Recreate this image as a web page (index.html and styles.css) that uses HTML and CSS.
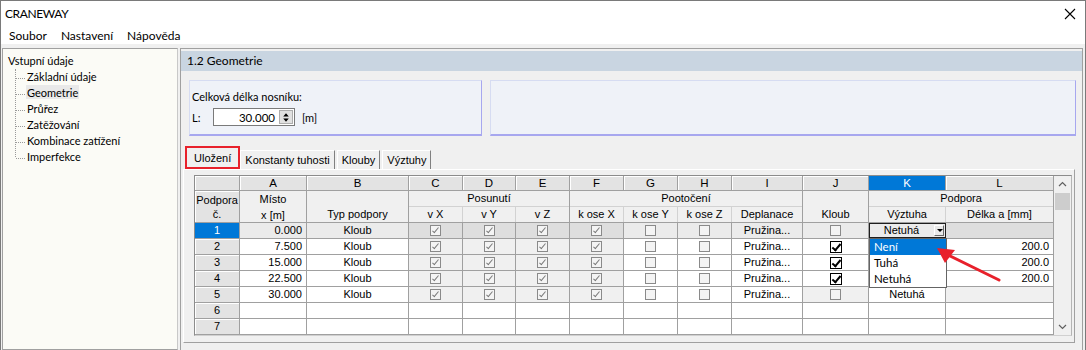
FILE: index.html
```html
<!DOCTYPE html>
<html lang="cs">
<head>
    <meta charset="UTF-8">
    <title>CRANEWAY</title>
    <link rel="stylesheet" href="styles.css">
</head>
<body>
    <div class="window">
        <div class="titlebar">
            <span class="title">CRANEWAY</span>
            <svg class="close" width="12" height="12" viewBox="0 0 12 12"><path d="M1 1L11 11M11 1L1 11" stroke="#000" stroke-width="1.1" fill="none"/></svg>
        </div>
        <div class="menubar">
            <span>Soubor</span>
            <span>Nastavení</span>
            <span>Nápověda</span>
        </div>

        <div class="workspace">
            <div class="tree">
                <div class="tree-root">Vstupní údaje</div>
                <ul class="tree-children">
                    <li><span>Základní údaje</span></li>
                    <li class="active"><span>Geometrie</span></li>
                    <li><span>Průřez</span></li>
                    <li><span>Zatěžování</span></li>
                    <li><span>Kombinace zatížení</span></li>
                    <li><span>Imperfekce</span></li>
                </ul>
            </div>

            <div class="main">
                <div class="page-title">1.2 Geometrie</div>

                <div class="inputs">
                    <div class="groupbox length-box">
                        <div class="field-label">Celková délka nosníku:</div>
                        <div class="field-row">
                            <span class="field-name">L:</span>
                            <div class="spin">
                                <span class="spin-value">30.000</span>
                                <span class="spin-btns">
                                    <svg width="13" height="13" viewBox="0 0 13 13"><path d="M6.5 2L9.5 5.5H3.5Z M6.5 11L9.5 7.5H3.5Z" fill="#000"/></svg>
                                </span>
                            </div>
                            <span class="unit">[m]</span>
                        </div>
                    </div>
                    <div class="groupbox spare-box"></div>
                </div>

                <div class="tabs">
                    <span class="tab selected">Uložení</span>
                    <span class="tab">Konstanty tuhosti</span>
                    <span class="tab">Klouby</span>
                    <span class="tab">Výztuhy</span>
                </div>

                <div class="tab-page">
                    <div class="grid-wrap">
                        <div class="grid">
                            <!-- column letters -->
                            <div class="letter"></div>
                            <div class="letter">A</div>
                            <div class="letter">B</div>
                            <div class="letter">C</div>
                            <div class="letter">D</div>
                            <div class="letter">E</div>
                            <div class="letter">F</div>
                            <div class="letter">G</div>
                            <div class="letter">H</div>
                            <div class="letter">I</div>
                            <div class="letter">J</div>
                            <div class="letter current">K</div>
                            <div class="letter">L</div>

                            <!-- header band -->
                            <div class="head corner span-rows">Podpora<br>č.</div>
                            <div class="head span-rows two-line">Místo<br>x [m]</div>
                            <div class="head span-rows bottom">Typ podpory</div>
                            <div class="head group" style="grid-column: span 3">Posunutí</div>
                            <div class="head group" style="grid-column: span 4">Pootočení</div>
                            <div class="head span-rows bottom">Kloub</div>
                            <div class="head group" style="grid-column: span 2">Podpora</div>
                            <div class="head sub first">v X</div>
                            <div class="head sub">v Y</div>
                            <div class="head sub">v Z</div>
                            <div class="head sub first">k ose X</div>
                            <div class="head sub">k ose Y</div>
                            <div class="head sub">k ose Z</div>
                            <div class="head sub">Deplanace</div>
                            <div class="head sub first">Výztuha</div>
                            <div class="head sub">Délka a [mm]</div>

                            <!-- row 1 (selected) -->
                            <div class="rowhead selected">1</div>
                            <div class="cell num sel">0.000</div>
                            <div class="cell sel">Kloub</div>
                            <div class="cell ro sel"><span class="cb dis on"></span></div>
                            <div class="cell ro sel"><span class="cb dis on"></span></div>
                            <div class="cell ro sel"><span class="cb dis on"></span></div>
                            <div class="cell ro sel"><span class="cb dis on"></span></div>
                            <div class="cell sel"><span class="cb dis"></span></div>
                            <div class="cell sel"><span class="cb dis"></span></div>
                            <div class="cell sel">Pružina...</div>
                            <div class="cell sel"><span class="cb dis"></span></div>
                            <div class="cell editor">
                                <span class="editor-box">Netuhá<span class="drop-btn"></span></span>
                                <ul class="drop-list">
                                    <li class="hot">Není</li>
                                    <li>Tuhá</li>
                                    <li>Netuhá</li>
                                </ul>
                            </div>
                            <div class="cell ro sel"></div>

                            <!-- row 2 -->
                            <div class="rowhead">2</div>
                            <div class="cell num">7.500</div>
                            <div class="cell">Kloub</div>
                            <div class="cell ro"><span class="cb dis on"></span></div>
                            <div class="cell ro"><span class="cb dis on"></span></div>
                            <div class="cell ro"><span class="cb dis on"></span></div>
                            <div class="cell ro"><span class="cb dis on"></span></div>
                            <div class="cell"><span class="cb dis"></span></div>
                            <div class="cell"><span class="cb dis"></span></div>
                            <div class="cell">Pružina...</div>
                            <div class="cell"><span class="cb on"></span></div>
                            <div class="cell"></div>
                            <div class="cell num">200.0</div>

                            <!-- row 3 -->
                            <div class="rowhead">3</div>
                            <div class="cell num">15.000</div>
                            <div class="cell">Kloub</div>
                            <div class="cell ro"><span class="cb dis on"></span></div>
                            <div class="cell ro"><span class="cb dis on"></span></div>
                            <div class="cell ro"><span class="cb dis on"></span></div>
                            <div class="cell ro"><span class="cb dis on"></span></div>
                            <div class="cell"><span class="cb dis"></span></div>
                            <div class="cell"><span class="cb dis"></span></div>
                            <div class="cell">Pružina...</div>
                            <div class="cell"><span class="cb on"></span></div>
                            <div class="cell"></div>
                            <div class="cell num">200.0</div>

                            <!-- row 4 -->
                            <div class="rowhead">4</div>
                            <div class="cell num">22.500</div>
                            <div class="cell">Kloub</div>
                            <div class="cell ro"><span class="cb dis on"></span></div>
                            <div class="cell ro"><span class="cb dis on"></span></div>
                            <div class="cell ro"><span class="cb dis on"></span></div>
                            <div class="cell ro"><span class="cb dis on"></span></div>
                            <div class="cell"><span class="cb dis"></span></div>
                            <div class="cell"><span class="cb dis"></span></div>
                            <div class="cell">Pružina...</div>
                            <div class="cell"><span class="cb on"></span></div>
                            <div class="cell"></div>
                            <div class="cell num">200.0</div>

                            <!-- row 5 -->
                            <div class="rowhead">5</div>
                            <div class="cell num">30.000</div>
                            <div class="cell">Kloub</div>
                            <div class="cell ro"><span class="cb dis on"></span></div>
                            <div class="cell ro"><span class="cb dis on"></span></div>
                            <div class="cell ro"><span class="cb dis on"></span></div>
                            <div class="cell ro"><span class="cb dis on"></span></div>
                            <div class="cell"><span class="cb dis"></span></div>
                            <div class="cell"><span class="cb dis"></span></div>
                            <div class="cell">Pružina...</div>
                            <div class="cell ro"><span class="cb dis"></span></div>
                            <div class="cell">Netuhá</div>
                            <div class="cell ro"></div>

                            <!-- rows 6, 7 (empty) -->
                            <div class="rowhead">6</div>
                            <div class="cell"></div><div class="cell"></div><div class="cell"></div>
                            <div class="cell"></div><div class="cell"></div><div class="cell"></div>
                            <div class="cell"></div><div class="cell"></div><div class="cell"></div>
                            <div class="cell"></div><div class="cell"></div><div class="cell"></div>
                            <div class="rowhead">7</div>
                            <div class="cell"></div><div class="cell"></div><div class="cell"></div>
                            <div class="cell"></div><div class="cell"></div><div class="cell"></div>
                            <div class="cell"></div><div class="cell"></div><div class="cell"></div>
                            <div class="cell"></div><div class="cell"></div><div class="cell"></div>
                        </div>

                        <div class="vscroll">
                            <svg class="sb-arrow" width="17" height="17" viewBox="0 0 17 17"><path d="M5 10L8.5 6.5L12 10" stroke="#606060" stroke-width="1.2" fill="none"/></svg>
                            <div class="sb-thumb"></div>
                            <div class="sb-track"></div>
                            <svg class="sb-arrow" width="17" height="17" viewBox="0 0 17 17"><path d="M5 7L8.5 10.5L12 7" stroke="#606060" stroke-width="1.2" fill="none"/></svg>
                        </div>

                        <!-- annotation arrow -->
                        <svg class="callout" width="70" height="40" viewBox="0 0 70 40">
                            <path d="M63 34L12 9" stroke="#e8212b" stroke-width="3" stroke-linecap="round" fill="none"/>
                            <path d="M1 2L19 4L9 17Z" fill="#e8212b"/>
                        </svg>
                    </div>
                </div>
            </div>
        </div>
    </div>
</body>
</html>
```

FILE: styles.css
```css
* {
    box-sizing: border-box;
}

body {
    margin: 0;
    width: 1086px;
    height: 350px;
    overflow: hidden;
    background: #fff;
    font-family: Lato, "Noto Sans", sans-serif;
    font-size: 12px;
    color: #000;
}

.window {
    height: 350px;
    border-left: 1px solid #7a7a7a;
    border-top: 1px solid #7a7a7a;
    border-right: 1px solid #7a7a7a;
    display: flex;
    flex-direction: column;
}

/* title + menu */
.titlebar {
    height: 25px;
    display: flex;
    align-items: center;
    justify-content: space-between;
    padding: 0 9px 0 4px;
    background: #fff;
}

.title {
    font-size: 12px;
    letter-spacing: -0.4px;
}

.menubar {
    height: 18px;
    display: flex;
    gap: 14px;
    padding-left: 8px;
    align-items: center;
    background: #fff;
}

/* workspace */
.workspace {
    flex: 1;
    display: flex;
    gap: 2px;
    background: #f0f0f0;
    padding: 4px 2px 0 1px;
    min-height: 0;
}

.tree {
    width: 176px;
    background: #fbfbf6;
    border: 1px solid #a0a0a0;
    border-right-color: #c8c8c8;
    padding: 4px 0 0 5px;
    font-size: 11px;
    line-height: 16px;
}

.tree-children {
    list-style: none;
    margin: 0 0 0 7px;
    padding: 0;
    border-left: 1px dotted #9a9a9a;
}

.tree-children li {
    height: 16px;
    white-space: nowrap;
}

.tree-children li:last-child {
    height: 8px;
}

.tree-children li::before {
    content: "";
    display: inline-block;
    width: 9px;
    border-top: 1px dotted #9a9a9a;
    vertical-align: middle;
    margin-right: 1px;
}

.tree-children li span {
    padding: 1px 1px 0;
}

.tree-children li.active span {
    background: #e9e9e9;
}

.main {
    flex: 1;
    border: 1px solid #a0a0a0;
    border-bottom: none;
    padding-top: 2px;
    display: flex;
    flex-direction: column;
}

.page-title {
    height: 20px;
    background: #c9d5e1;
    padding-left: 6px;
    line-height: 20px;
}

/* input group boxes */
.inputs {
    display: flex;
    gap: 8px;
    margin: 9px 6px 0 8px;
    height: 57px;
}

.groupbox {
    background: #eff2f8;
    border: 1px solid #d6dcf2;
    border-right-color: #a7a7ef;
    border-bottom: 2px solid #a7a7ef;
}

.length-box {
    width: 293px;
    padding: 8px 0 0 2px;
    font-size: 11px;
}

.spare-box {
    flex: 1;
}

.field-label {
    line-height: 16px;
}

.field-row {
    display: flex;
    align-items: center;
    margin-top: 3px;
}

.field-name {
    width: 21px;
}

.spin {
    width: 82px;
    height: 18px;
    border: 1px solid #7a7a7a;
    background: #fff;
    display: flex;
    align-items: center;
    justify-content: flex-end;
    padding-right: 1px;
    font-size: 11.5px;
}

.spin-value {
    margin-right: 4px;
}

.spin-btns {
    width: 14px;
    height: 14px;
    background: #e1e1e1;
    border: 1px solid #adadad;
    display: flex;
    align-items: center;
    justify-content: center;
}

.unit {
    margin-left: 7px;
}

/* tabs */
.tabs {
    display: flex;
    align-items: flex-end;
    height: 24px;
    margin: 9px 0 0 4px;
    font-family: "Liberation Sans", Arial, sans-serif;
    font-size: 11px;
}

.tab {
    height: 19px;
    line-height: 18px;
    padding: 0 4px;
    margin-right: 2px;
    border-left: 1px solid #fff;
    border-top: 1px solid #fff;
    border-right: 1px solid #808080;
}

.tab.selected {
    height: 23px;
    line-height: 22px;
    padding: 0 8px;
    outline: 2px solid #e8212b;
    outline-offset: -2px;
    margin-right: 0;
}

.tab-page {
    flex: 1;
    margin: 0 7px 7px 2px;
    border: 1px solid #fff;
    border-right-color: #a0a0a0;
    border-bottom-color: #a0a0a0;
    padding: 5px 2px 6px 10px;
    font-family: "Liberation Sans", Arial, sans-serif;
    font-size: 11px;
}

/* spreadsheet */
.grid-wrap {
    position: relative;
    display: flex;
    width: 878px;
    border: 1px solid #8c8c8c;
    border-right-color: #b4b4b4;
    border-bottom-color: #d0d0d0;
}

.grid {
    display: grid;
    grid-template-columns: 44px 66px 101px 53px 52px 53px 53px 53px 53px 70px 65px 76px 107px;
    grid-template-rows: 14px 15px 15px repeat(7, 15px);
    gap: 1px;
    background: #a0a0a0;
    border-right: 1px solid #a0a0a0;
    border-bottom: 1px solid #a0a0a0;
}

.letter {
    background: #e3e3e3;
    box-shadow: inset 1px 1px #fff;
    text-align: center;
    line-height: 14px;
    font-size: 11.5px;
}

.letter.current {
    background: #0078d7;
    color: #fff;
    box-shadow: none;
}

.head {
    background: #f0f0f0;
    text-align: center;
    line-height: 15px;
}

.head.corner {
    background: #e3e3e3;
    box-shadow: inset 1px 1px #fff;
    line-height: 14px;
    padding-top: 2px;
}

.head.span-rows {
    grid-row: span 2;
}

.head.two-line {
    line-height: 16px;
}

.head.bottom {
    display: flex;
    align-items: flex-end;
    justify-content: center;
}

.head.sub {
    margin-left: -1px;
    margin-top: -1px;
    border-left: 1px solid #d2d2d2;
    border-top: 1px solid #d2d2d2;
    line-height: 14px;
}

.head.sub.first {
    margin-left: 0;
    border-left: none;
}

.rowhead {
    background: #e3e3e3;
    box-shadow: inset 1px 1px #fff;
    text-align: center;
    line-height: 15px;
}

.rowhead.selected {
    background: #0078d7;
    color: #fff;
    box-shadow: none;
}

.cell {
    background: #fff;
    text-align: center;
    line-height: 15px;
    display: flex;
    align-items: center;
    justify-content: center;
}

.cell.num {
    justify-content: flex-end;
    padding-right: 4px;
}

.cell.ro {
    background: #f0f0f0;
}

.cell.sel {
    background: #ebebeb;
}

.cell.ro.sel {
    background: #dedede;
}

/* checkboxes */
.cb {
    position: relative;
    width: 12px;
    height: 12px;
    border: 1px solid #000;
    background: #fff;
}

.cb.dis {
    width: 11px;
    height: 11px;
    border-color: #8a8a8a;
    background: #f4f4f4;
}

.cb.on::after {
    content: "";
    position: absolute;
    left: 3px;
    top: 0;
    width: 3px;
    height: 7px;
    border: solid #000;
    border-width: 0 2px 2px 0;
    transform: rotate(40deg);
}

.cb.dis.on::after {
    left: 3px;
    top: 0;
    width: 2px;
    height: 6px;
    border-color: #7a7a7a;
    border-width: 0 1.5px 1.5px 0;
}

/* dropdown editor in K1 */
.cell.editor {
    position: relative;
    background: #ebebeb;
    overflow: visible;
}

.editor-box {
    position: absolute;
    left: 0;
    top: 0;
    right: -1px;
    bottom: 0;
    border: 1px solid #1e1e1e;
    background: #ebebeb;
    padding-right: 12px;
    display: flex;
    align-items: center;
    justify-content: center;
}

.drop-btn {
    position: absolute;
    right: 1px;
    top: 1px;
    width: 10px;
    height: 11px;
    background: #e9e9e9;
    border-left: 1px solid #fff;
    border-top: 1px solid #fff;
    border-right: 1px solid #696969;
    border-bottom: 1px solid #696969;
}

.drop-btn::after {
    content: "";
    position: absolute;
    left: 2px;
    top: 3px;
    border-left: 3px solid transparent;
    border-right: 3px solid transparent;
    border-top: 3px solid #000;
}

.drop-list {
    position: absolute;
    left: 0;
    top: 15px;
    width: 78px;
    margin: 0;
    padding: 0;
    list-style: none;
    background: #fff;
    border: 1px solid #646464;
    text-align: left;
    z-index: 2;
}

.drop-list li {
    height: 16px;
    line-height: 16px;
    padding-left: 4px;
    font-family: Lato, "Noto Sans", sans-serif;
    font-size: 11.5px;
}

.drop-list li.hot {
    background: #0078d7;
    color: #fff;
}

/* vertical scrollbar */
.vscroll {
    width: 17px;
    display: flex;
    flex-direction: column;
    align-items: center;
    background: #f0f0f0;
}

.sb-arrow {
    flex: none;
}

.sb-thumb {
    width: 15px;
    height: 17px;
    background: #cdcdcd;
}

.sb-track {
    flex: 1;
}

.callout {
    position: absolute;
    left: 741px;
    top: 70px;
    z-index: 3;
}
```
